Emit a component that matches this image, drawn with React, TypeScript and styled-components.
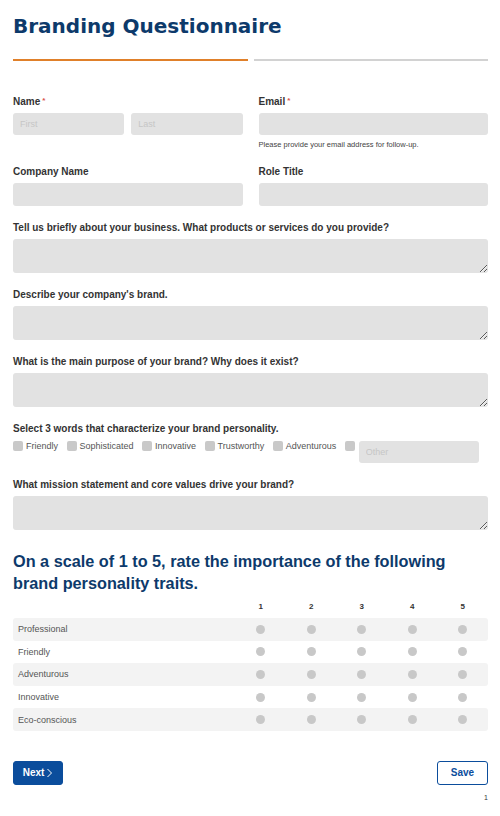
import React from "react";
import styled, { createGlobalStyle } from "styled-components";

const Global = createGlobalStyle`
  html, body { margin: 0; padding: 0; background: #fff; }
  body { font-family: "Liberation Sans", Arial, sans-serif; color: #333; }
  * { box-sizing: border-box; }
`;

const Page = styled.div`
  width: 500px;
  padding: 13px 12px 12px 13px;
  display: flex;
  flex-direction: column;
`;

const Title = styled.h1`
  margin: 0;
  font-family: "DejaVu Sans", Verdana, sans-serif;
  font-weight: bold;
  font-size: 20px;
  line-height: 27px;
  color: #0d3a6b;
`;

const Progress = styled.div`
  display: flex;
  gap: 6px;
  margin-top: 19px;
`;

const Bar = styled.div<{ $active?: boolean }>`
  flex: 1;
  height: 2px;
  background: ${(p) => (p.$active ? "#e0802a" : "#d2d2d2")};
`;

const Form = styled.div`
  margin-top: 35px;
  display: flex;
  flex-direction: column;
  gap: 16px;
`;

const Row2 = styled.div`
  display: grid;
  grid-template-columns: 1fr 1fr;
  column-gap: 16px;
`;

const Field = styled.div`
  display: flex;
  flex-direction: column;
`;

const Label = styled.div`
  font-size: 10px;
  font-weight: bold;
  line-height: 12px;
  color: #333;
  margin-bottom: 5px;
`;

const Req = styled.span`
  color: #d9534f;
  font-size: 8px;
  vertical-align: top;
  margin-left: 2px;
  position: relative;
  top: -1px;
`;

const Pair = styled.div`
  display: grid;
  grid-template-columns: 1fr 1fr;
  column-gap: 7px;
`;

const Input = styled.input<{ $h?: number }>`
  width: 100%;
  height: ${(p) => p.$h ?? 22}px;
  border: none;
  border-radius: 3px;
  background: #e2e2e2;
  padding: 0 7px;
  font-family: "Liberation Sans", Arial, sans-serif;
  font-size: 9px;
  color: #333;
  outline: none;
  &::placeholder { color: #c6c6c6; }
`;

const Area = styled.textarea`
  width: 100%;
  height: 34px;
  min-height: 34px;
  border: none;
  border-radius: 3px;
  background: #e2e2e2;
  resize: vertical;
  outline: none;
  display: block;
  padding: 4px 7px;
  margin: 0;
`;

const Help = styled.div`
  font-size: 7.5px;
  color: #444;
  margin-top: 5px;
  line-height: 10px;
`;

const Checks = styled.div`
  display: flex;
  align-items: flex-start;
  flex-wrap: nowrap;
  padding-top: 1px;
`;

const CheckItem = styled.label<{ $last?: boolean }>`
  display: flex;
  align-items: center;
  gap: 3px;
  font-size: 9px;
  color: #555;
  height: 10px;
  margin-right: ${(p) => (p.$last ? "0" : "8.5px")};
  white-space: nowrap;
`;

const Box = styled.span`
  width: 10px;
  height: 10px;
  border-radius: 2px;
  background: #c9c9c9;
  display: inline-block;
  flex: none;
`;

const OtherWrap = styled.div`
  display: flex;
  align-items: flex-start;
  gap: 4px;
`;

const OtherInput = styled(Input)`
  width: 120px;
`;

const H2 = styled.h2`
  margin: 20px 0 0;
  font-size: 16.25px;
  line-height: 22px;
  font-weight: bold;
  color: #0d3a6b;
`;

const Table = styled.div`
  margin-top: 4px;
  display: flex;
  flex-direction: column;
`;

const TRow = styled.div<{ $shade?: boolean; $head?: boolean }>`
  display: grid;
  grid-template-columns: 1fr repeat(5, 50.5px);
  align-items: center;
  height: ${(p) => (p.$head ? "16px" : "22.6px")};
  background: ${(p) => (p.$shade ? "#f3f3f3" : "transparent")};
  border-radius: 3px;
  margin-bottom: ${(p) => (p.$head ? "4px" : "0")};
`;

const RowLabel = styled.div`
  padding-left: 5px;
  font-size: 9px;
  color: #555;
`;

const HeadNum = styled.div`
  text-align: center;
  font-size: 8px;
  font-weight: bold;
  color: #333;
`;

const Cell = styled.div`
  display: flex;
  justify-content: center;
`;

const Dot = styled.span`
  width: 9px;
  height: 9px;
  border-radius: 50%;
  background: #c8c8c8;
`;

const Footer = styled.div`
  margin-top: 30px;
  display: flex;
  justify-content: space-between;
  align-items: center;
`;

const Btn = styled.button<{ $primary?: boolean }>`
  height: 24px;
  border-radius: 3px;
  font-family: "Liberation Sans", Arial, sans-serif;
  font-size: 10px;
  font-weight: bold;
  display: flex;
  align-items: center;
  justify-content: center;
  gap: 2px;
  cursor: pointer;
  background: ${(p) => (p.$primary ? "#0b4d9c" : "#fff")};
  color: ${(p) => (p.$primary ? "#fff" : "#0b4d9c")};
  border: 1px solid #0b4d9c;
  width: ${(p) => (p.$primary ? "50px" : "51px")};
  padding: 0;
`;

const PageNum = styled.div`
  text-align: right;
  font-size: 7px;
  line-height: 8px;
  color: #333;
  margin-top: 9px;
`;

const traits = ["Professional", "Friendly", "Adventurous", "Innovative", "Eco-conscious"];
const words = ["Friendly", "Sophisticated", "Innovative", "Trustworthy", "Adventurous"];

export default function App() {
  return (
    <>
      <Global />
      <Page>
        <Title>Branding Questionnaire</Title>
        <Progress>
          <Bar $active />
          <Bar />
        </Progress>
        <Form>
          <Row2>
            <Field>
              <Label>
                Name<Req>*</Req>
              </Label>
              <Pair>
                <Input placeholder="First" />
                <Input placeholder="Last" />
              </Pair>
            </Field>
            <Field>
              <Label>
                Email<Req>*</Req>
              </Label>
              <Input />
              <Help>Please provide your email address for follow-up.</Help>
            </Field>
          </Row2>
          <Row2>
            <Field>
              <Label>Company Name</Label>
              <Input $h={23} />
            </Field>
            <Field>
              <Label>Role Title</Label>
              <Input $h={23} />
            </Field>
          </Row2>
          <Field>
            <Label>Tell us briefly about your business. What products or services do you provide?</Label>
            <Area />
          </Field>
          <Field>
            <Label>Describe your company's brand.</Label>
            <Area />
          </Field>
          <Field>
            <Label>What is the main purpose of your brand? Why does it exist?</Label>
            <Area />
          </Field>
          <Field>
            <Label>Select 3 words that characterize your brand personality.</Label>
            <Checks>
              {words.map((w) => (
                <CheckItem key={w}>
                  <Box />
                  {w}
                </CheckItem>
              ))}
              <OtherWrap>
                <CheckItem $last>
                  <Box />
                </CheckItem>
                <OtherInput placeholder="Other" />
              </OtherWrap>
            </Checks>
          </Field>
          <Field>
            <Label>What mission statement and core values drive your brand?</Label>
            <Area />
          </Field>
        </Form>
        <H2>On a scale of 1 to 5, rate the importance of the following brand personality traits.</H2>
        <Table>
          <TRow $head>
            <div />
            {[1, 2, 3, 4, 5].map((n) => (
              <HeadNum key={n}>{n}</HeadNum>
            ))}
          </TRow>
          {traits.map((t, i) => (
            <TRow key={t} $shade={i % 2 === 0}>
              <RowLabel>{t}</RowLabel>
              {[1, 2, 3, 4, 5].map((n) => (
                <Cell key={n}>
                  <Dot />
                </Cell>
              ))}
            </TRow>
          ))}
        </Table>
        <Footer>
          <Btn $primary>
            Next
            <svg width="7" height="10" viewBox="0 0 7 10" fill="none">
              <path d="M1.5 1 L5.5 5 L1.5 9" stroke="#fff" strokeWidth="1" />
            </svg>
          </Btn>
          <Btn>Save</Btn>
        </Footer>
        <PageNum>1</PageNum>
      </Page>
    </>
  );
}
